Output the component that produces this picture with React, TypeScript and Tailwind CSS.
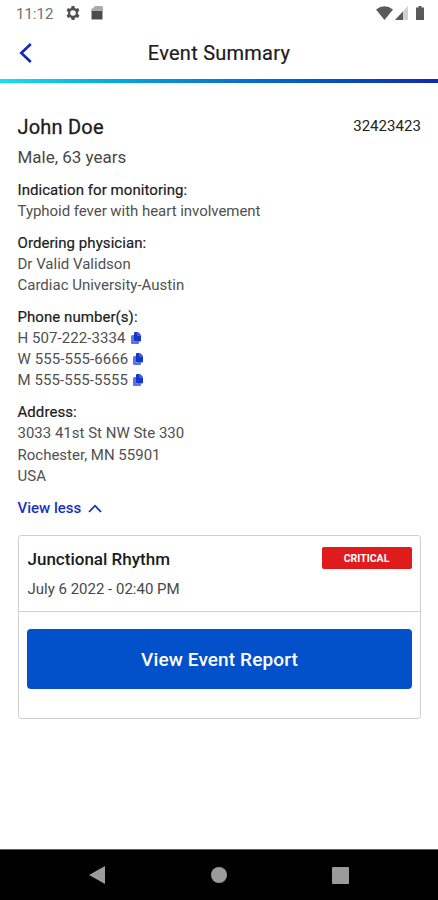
import React from "react";

function StatusBar() {
  return (
    <div className="flex h-7 items-center justify-between pl-4 pr-[14px] text-[#5f5f5f]">
      <div className="flex items-center">
        <span className="w-[50px] text-[15px] text-[#707070]">11:12</span>
        <svg className="h-[14px] w-[14px] -translate-y-px" viewBox="2 2 20 20" fill="#505050">
          <path fillRule="evenodd" d="M10 2h4l.6 3 1.8 1 2.8-1 2 3.500-2.200 2v3l2.200 2-2 3.500-2.800-1-1.800 1-.6 3h-4l-.6-3-1.800-1-2.800 1-2-3.500 2.200-2v-3l-2.200-2 2-3.500 2.800 1 1.800-1zM12 8a4 4 0 1 0 0 8 4 4 0 0 0 0-8z" />
        </svg>
        <svg className="ml-[11px] h-[14px] w-3 -translate-y-px" viewBox="0 0 12 14">
          <path d="M4 0h6.500Q12 0 12 1.500v11Q12 14 10.500 14h-9Q0 14 0 12.500V4z" fill="#aaa" />
          <path d="M1 5h10v8H1z" fill="#4c4c4c" />
        </svg>
      </div>
      <div className="flex -translate-y-px items-center">
        <svg className="h-[14px] w-[17px]" viewBox="0 0 17 14" fill="#5a5a5a">
          <path d="M0 3.500Q8.500-3 17 3.500L8.500 14z" />
        </svg>
        <svg className="ml-[2px] h-[14px] w-[13px]" viewBox="0 0 13 14">
          <path d="M13 0v14H0z" fill="#d2d2d2" />
          <path d="M8 5.400V14H0z" fill="#5a5a5a" />
        </svg>
        <svg className="ml-2 h-[14px] w-2" viewBox="0 0 8 14" fill="#5a5a5a">
          <path d="M2.500 0h3v1.500H8V14H0V1.500h2.500z" />
        </svg>
      </div>
    </div>
  );
}

function CopyIcon() {
  return (
    <svg className="h-3 w-[10px] -translate-y-px" viewBox="0 0 10 12">
      <path d="M0 4.500Q0 3 1.500 3H3v6.500h5V11q0 1-1 1H1q-1 0-1-1z" fill="#5b74e2" />
      <path d="M4 0h3l3 3v5.500q0 1-1 1H4q-1 0-1-1V1q0-1 1-1z" fill="#1537c8" />
      <path d="M6.800 0v3.200H10" fill="none" stroke="#8fa0ec" strokeWidth="0.700" />
    </svg>
  );
}

function Group({ label, children }: { label: string; children: React.ReactNode }) {
  return (
    <section className="mb-[10.400px]">
      <h3 className="font-normal tracking-[0.060px] text-[#1c1c1c] [-webkit-text-stroke:0.200px_#1c1c1c]">{label}</h3>
      {children}
    </section>
  );
}

function Phone({ children }: { children: React.ReactNode }) {
  return (
    <div className="flex items-center gap-[5px]">
      <span className="tracking-[0.080px]">{children}</span>
      <CopyIcon />
    </div>
  );
}

export default function App() {
  return (
    <div className="flex h-[900px] w-full flex-col bg-white font-[Roboto,sans-serif]">
      <StatusBar />
      <header className="grid h-[51px] grid-cols-[60px_1fr_60px] items-center">
        <svg className="ml-[19px] h-[22px] w-[14px] -translate-y-px" viewBox="0 0 14 22" fill="none" stroke="#1029b8" strokeWidth="2.600">
          <path d="M11.800 2 2.300 11l9.500 9" />
        </svg>
        <h1 className="-mt-[2px] text-center text-[20px] font-normal tracking-[0.250px] text-[#1c1c1c] [-webkit-text-stroke:0.200px_#1c1c1c]">Event Summary</h1>
      </header>
      <div className="h-[4px] bg-linear-to-r from-[#18e0ee] via-[#0c78d0] to-[#1028b0]" />

      <main className="flex-1 px-[17.500px] pt-[32px]">
        <div className="flex justify-between">
          <h2 className="text-[20px] font-normal leading-6 tracking-[0.200px] text-[#1c1c1c] [-webkit-text-stroke:0.300px_#1c1c1c]">John Doe</h2>
          <span className="-mr-[0.500px] text-[15px] leading-[22px] tracking-[0.050px] text-[#222]">32423423</span>
        </div>
        <p className="mt-[7px] text-[17px] leading-[22px] text-[#484848]">Male, 63 years</p>
        <div className="mt-[11.700px] text-[15px] leading-[21.250px] text-[#505050]">
          <Group label="Indication for monitoring:">
            <p className="tracking-[-0.040px]">Typhoid fever with heart involvement</p>
          </Group>
          <Group label="Ordering physician:">
            <p>Dr Valid Validson</p>
            <p>Cardiac University-Austin</p>
          </Group>
          <Group label="Phone number(s):">
            <Phone>H 507-222-3334</Phone>
            <Phone>W 555-555-6666</Phone>
            <Phone>M 555-555-5555</Phone>
          </Group>
          <Group label="Address:">
            <p>3033 41st St NW Ste 330</p>
            <p>Rochester, MN 55901</p>
            <p>USA</p>
          </Group>
          <button className="flex items-center gap-[7px] font-medium text-[#1433c0]">
            View less
            <svg className="h-[9px] w-[14px]" viewBox="0 0 14 9" fill="none" stroke="currentColor" strokeWidth="1.800">
              <path d="m1 8 6-6.300L13 8" />
            </svg>
          </button>
        </div>

        <div className="mt-[16.300px] h-[184px] rounded-[3px] border border-[#d0d0d0]">
          <div className="flex h-[76px] justify-between border-b border-[#d0d0d0] pl-[9px] pr-2">
            <div>
              <h4 className="mt-[12px] text-[17px] font-medium leading-[22px] text-[#1c1c1c]">Junctional Rhythm</h4>
              <p className="mt-[9px] text-[15px] leading-5 text-[#484848]">July 6 2022 - 02:40 PM</p>
            </div>
            <span className="mt-[11px] flex h-[22px] w-[90px] items-center justify-center rounded-[2px] bg-[#df1b1b] pt-px text-[10.500px] font-bold text-white">CRITICAL</span>
          </div>
          <button className="ml-[8.500px] mt-[17px] block h-[60px] w-[385px] rounded-[4px] bg-[#0350cb] pt-[3px] text-[19px] font-medium tracking-[0.120px] text-white">View Event Report</button>
        </div>
      </main>

      <nav className="flex h-[51px] items-center border-t border-[#606060] bg-black">
        <svg className="ml-[89px] h-[18px] w-4" viewBox="0 0 16 18" fill="#9b9b9b">
          <path d="M16 0v18L0 9z" />
        </svg>
        <div className="ml-[106px] h-4 w-4 rounded-full bg-[#9b9b9b]" />
        <div className="ml-[105px] h-[17px] w-[17px] rounded-[1px] bg-[#9b9b9b]" />
      </nav>
    </div>
  );
}
